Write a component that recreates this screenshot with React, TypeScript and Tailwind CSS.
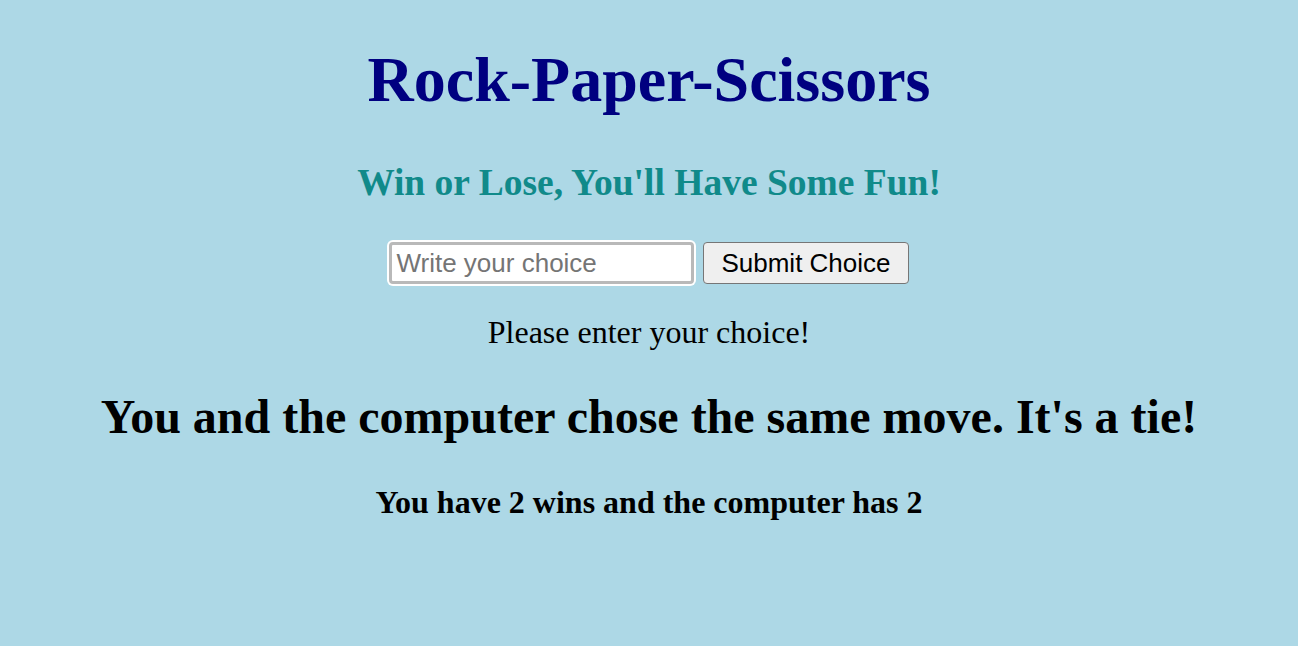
import React from "react";

export default function App() {
  return (
    <div className="min-h-[646px] w-full bg-[#add8e6] flex flex-col items-center pt-[48px] text-center" style={{ fontFamily: '"Liberation Serif", "Times New Roman", serif' }}>
      <h1 className="text-[64px] leading-none font-bold text-[#000080] font-['Liberation_Serif',serif]">Rock-Paper-Scissors</h1>
      <h2 className="mt-[52px] text-[37.5px] leading-[37px] font-bold text-[#108a8a] font-['Liberation_Serif',serif]">Win or Lose, You'll Have Some Fun!</h2>
      <div className="mt-[41px] flex items-center gap-[9px] font-['Liberation_Sans',Arial,sans-serif]">
        <input
          type="text"
          placeholder="Write your choice"
          className="w-[305px] h-[42px] border-[3px] border-[#b9b9b9] rounded-[4px] ring-2 ring-white bg-white pl-[4px] pr-[5px] text-[26px] text-black placeholder:text-[#757575] outline-none font-['Liberation_Sans',Arial,sans-serif]"
        />
        <button className="h-[42px] px-[17px] bg-[#efefef] border border-[#767676] rounded-[4px] text-[26px] leading-none text-black font-['Liberation_Sans',Arial,sans-serif]">
          Submit Choice
        </button>
      </div>
      <p className="mt-[32px] text-[32px] leading-none text-black font-['Liberation_Serif',serif]">Please enter your choice!</p>
      <h1 className="mt-[45px] text-[48px] leading-none font-bold text-black font-['Liberation_Serif',serif]">You and the computer chose the same move. It's a tie!</h1>
      <h3 className="mt-[45px] text-[32px] leading-none font-bold text-black font-['Liberation_Serif',serif]">You have 2 wins and the computer has 2</h3>
    </div>
  );
}
